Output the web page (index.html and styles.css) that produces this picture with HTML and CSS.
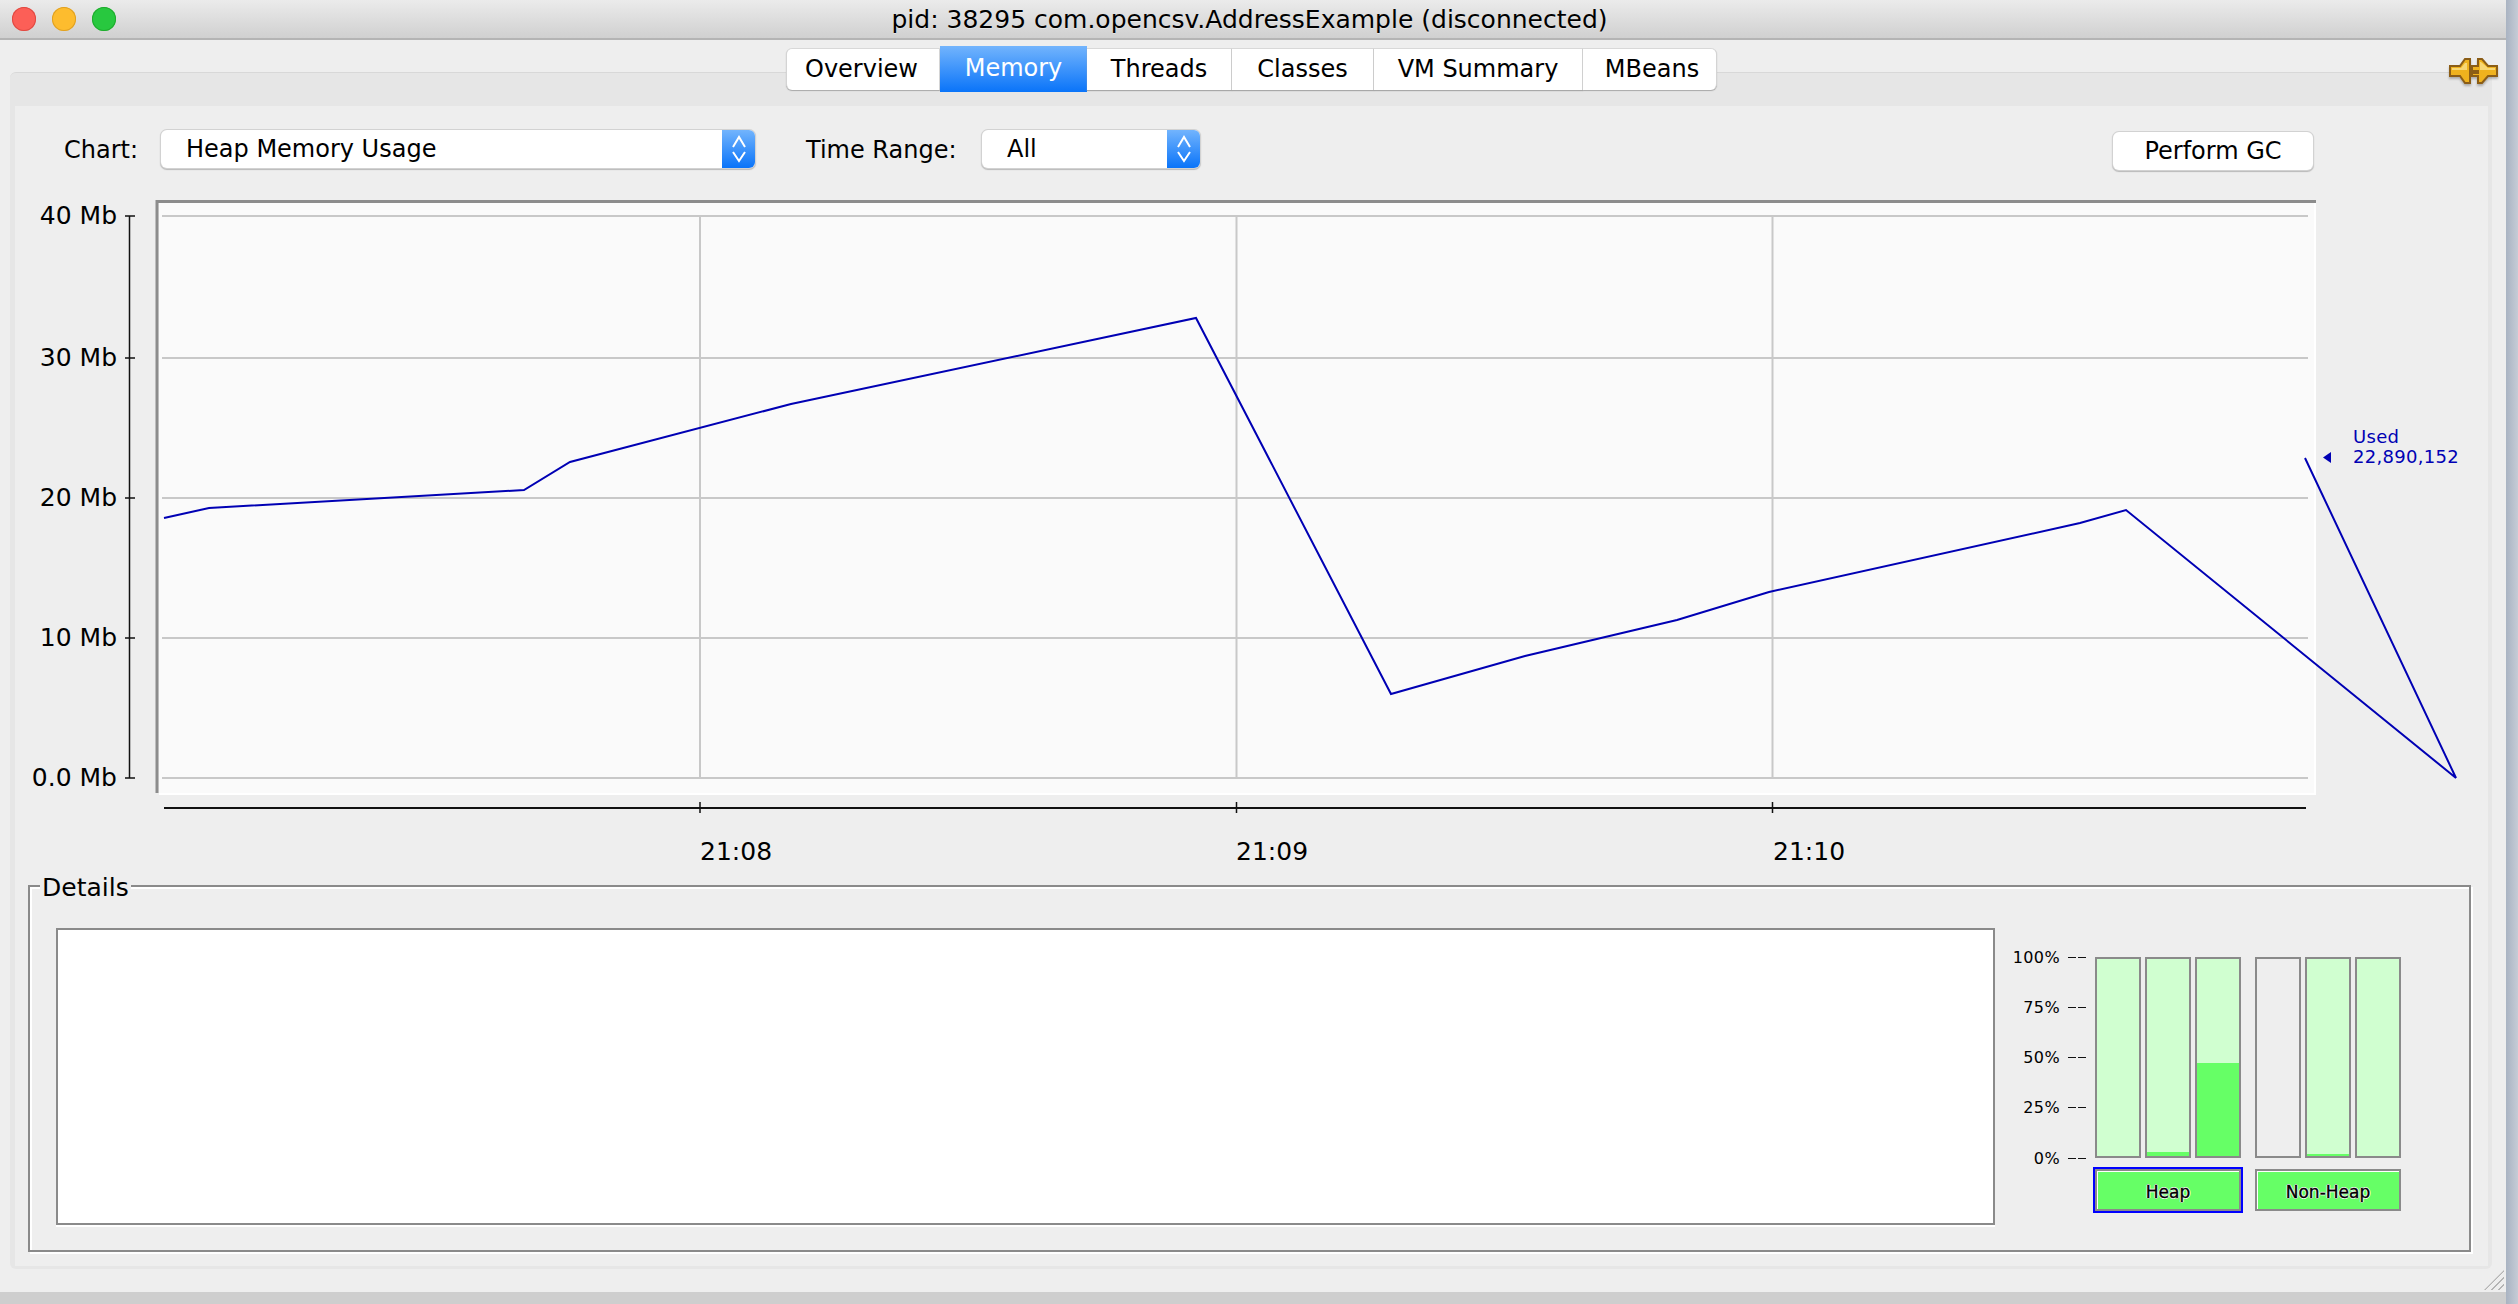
FILE: index.html
```html
<!DOCTYPE html>
<html>
<head>
<title>pid: 38295 com.opencsv.AddressExample (disconnected)</title>
<link rel="stylesheet" href="styles.css">
</head>
<body>
<div class="screen">
    <div class="window">
        <div class="titlebar">
            <div class="lights">
                <span class="light light-red"></span>
                <span class="light light-yellow"></span>
                <span class="light light-green"></span>
            </div>
            <span class="title">pid: 38295 com.opencsv.AddressExample (disconnected)</span>
        </div>

        <div class="tabs">
            <div class="tab tab-first">Overview</div>
            <div class="tab tab-active">Memory</div>
            <div class="tab">Threads</div>
            <div class="tab">Classes</div>
            <div class="tab">VM Summary</div>
            <div class="tab tab-last">MBeans</div>
        </div>

        <!-- disconnected plug -->
        <svg class="plug" width="50" height="28" viewBox="0 0 50 28">
            <path class="plug-body" d="M1 9h10l5-7h5v24h-5l-5-7H1z"/>
            <path class="plug-shine" d="M3 11h9l4-5h2v7H3z"/>
            <path class="plug-body" d="M29 2h4l6 7h9v10h-9l-6 7h-4v-7h-6v-3h6v-2h-6V9h6z"/>
            <path class="plug-shine" d="M31 5h1l7 6h7v2H31z"/>
        </svg>

        <div class="pane">
            <div class="content">
                <div class="controls">
                    <label class="label label-chart">Chart:</label>
                    <div class="combo combo-chart">
                        <span class="combo-text">Heap Memory Usage</span>
                        <span class="combo-arrows">
                            <svg width="16" height="28" viewBox="0 0 16 28"><path d="M2 12L8 2l6 10M2 17l6 9 6-9"/></svg>
                        </span>
                    </div>
                    <label class="label label-range">Time Range:</label>
                    <div class="combo combo-range">
                        <span class="combo-text">All</span>
                        <span class="combo-arrows">
                            <svg width="16" height="28" viewBox="0 0 16 28"><path d="M2 12L8 2l6 10M2 17l6 9 6-9"/></svg>
                        </span>
                    </div>
                    <div class="gc-button">Perform GC</div>
                </div>

                <svg class="chart" width="2472" height="695" viewBox="16 190 2472 695">
                    <rect class="plot-white" x="160" y="203" width="2157" height="592"/>
                    <rect class="plot" x="160" y="203" width="2155" height="590"/>
                    <path class="plot-edge" d="M158 793V201.500H2317"/>

                    <path class="grid" d="M163 216H2309M163 358H2309M163 498H2309M163 638H2309M163 778H2309"/>
                    <path class="grid" d="M701 216V778M1237.500 216V778M1773.500 216V778"/>

                    <path class="axis" d="M130.500 216V778M126 216H136M126 358H136M126 498H136M126 638H136M126 778H136"/>
                    <text class="axis-text" x="118" y="224" text-anchor="end">40 Mb</text>
                    <text class="axis-text" x="118" y="366" text-anchor="end">30 Mb</text>
                    <text class="axis-text" x="118" y="506" text-anchor="end">20 Mb</text>
                    <text class="axis-text" x="118" y="646" text-anchor="end">10 Mb</text>
                    <text class="axis-text" x="118" y="786" text-anchor="end">0.0 Mb</text>

                    <path class="axis axis-x" d="M165 808H2307"/>
                    <path class="axis" d="M701 802V813M1237.500 802V813M1773.500 802V813"/>
                    <text class="axis-text" x="701" y="860">21:08</text>
                    <text class="axis-text" x="1237" y="860">21:09</text>
                    <text class="axis-text" x="1774" y="860">21:10</text>

                    <polyline class="series" points="165,518 210,508 525,490 571,462 792,404 1197,318 1392,694 1526,656 1678,620 1770,592 2081,523 2127,510 2457,778 2306,458"/>

                    <path class="series-mark" d="M2332 452V463L2324 457.500z"/>
                    <text class="series-text" x="2354" y="443">Used</text>
                    <text class="series-text" x="2354" y="463">22,890,152</text>
                </svg>

                <div class="details">
                    <span class="details-title">Details</span>
                    <div class="details-text"></div>
                    <div class="pools">
                        <div class="scale">
                            <div class="scale-row"><span>100%</span><i class="tick"></i></div>
                            <div class="scale-row"><span>75%</span><i class="tick"></i></div>
                            <div class="scale-row"><span>50%</span><i class="tick"></i></div>
                            <div class="scale-row"><span>25%</span><i class="tick"></i></div>
                            <div class="scale-row"><span>0%</span><i class="tick"></i></div>
                        </div>
                        <div class="group">
                            <div class="bars">
                                <div class="bar"></div>
                                <div class="bar"><div class="bar-fill" style="height:2%"></div></div>
                                <div class="bar"><div class="bar-fill" style="height:47%"></div></div>
                            </div>
                            <div class="pool-btn pool-btn-selected">Heap</div>
                        </div>
                        <div class="group">
                            <div class="bars">
                                <div class="bar bar-empty"></div>
                                <div class="bar"><div class="bar-fill" style="height:1%"></div></div>
                                <div class="bar"></div>
                            </div>
                            <div class="pool-btn">Non-Heap</div>
                        </div>
                    </div>
                </div>
            </div>
        </div>

        <div class="grip"></div>
    </div>
    <div class="footer-strip"></div>
    <div class="edge-strip"></div>
</div>
</body>
</html>
```

FILE: styles.css
```css
* {
    box-sizing: border-box;
}
html, body {
    margin: 0;
    padding: 0;
}
body {
    font-family: "DejaVu Sans", sans-serif;
    font-size: 24px;
    color: #000;
    background-color: #cecece;
}
.screen {
    display: grid;
    grid-template-columns: 2506px 12px;
    grid-template-rows: 1292px 12px;
    width: 2518px;
    height: 1304px;
    overflow: hidden;
}
.window {
    position: relative;
    background-color: #eeeeee;
}
.footer-strip {
    grid-column: 1;
    grid-row: 2;
    background-color: #cecece;
}
.edge-strip {
    grid-column: 2;
    grid-row: 1 / 3;
    background: linear-gradient(to right, #a9b3c2, #c6ccd6);
}

/* title bar */
.titlebar {
    display: flex;
    align-items: center;
    height: 40px;
    padding: 0 12px;
    background: linear-gradient(to bottom, #ebebeb, #d0d0d0);
    border-bottom: 2px solid #b4b4b4;
}
.lights {
    display: flex;
    gap: 16px;
    width: 0;
}
.light {
    flex: none;
    width: 24px;
    height: 24px;
    border-radius: 50%;
}
.light-red {
    background-color: #fc5f57;
    box-shadow: inset 0 0 0 1px #df4a42;
}
.light-yellow {
    background-color: #fdbc2e;
    box-shadow: inset 0 0 0 1px #dfa023;
}
.light-green {
    background-color: #28c83f;
    box-shadow: inset 0 0 0 1px #1fab2d;
}
.title {
    flex: 1;
    padding-right: 7px;
    text-align: center;
    font-size: 25px;
    white-space: nowrap;
    text-shadow: 0 1px 0 rgba(255, 255, 255, 0.4);
}

/* tabs */
.tabs {
    position: relative;
    z-index: 2;
    display: grid;
    grid-template-columns: 154px 147px 145px 142px 209px 134px;
    justify-content: center;
    height: 39px;
    margin: 8px 3px -15px 0;
}
.tab {
    line-height: 41px;
    text-align: center;
    background-color: #fff;
    border-top: 1px solid #d8d8d8;
    border-right: 1px solid #d4d4d4;
    box-shadow: 0 1px 1px #a8a8a8;
}
.tab-first {
    padding-right: 3px;
    border-left: 1px solid #d4d4d4;
    border-radius: 6px 0 0 6px;
}
.tab-last {
    padding-left: 5px;
    border-radius: 0 6px 6px 0;
}
.tab-active {
    margin: -2px 0;
    line-height: 45px;
    color: #fff;
    border: 0;
    background: linear-gradient(to bottom, #72b4fd, #0a74f9);
    box-shadow: none;
}

.plug {
    position: absolute;
    z-index: 3;
    left: 2449px;
    top: 57px;
    filter: drop-shadow(0 2px 1px rgba(0, 0, 0, 0.25));
}
.plug-body {
    fill: #efb21e;
    stroke: #8b5d16;
    stroke-width: 2;
}
.plug-shine {
    fill: #f8d774;
}

/* panes */
.pane {
    width: 2482px;
    height: 1197px;
    margin-left: 10px;
    padding: 33px 4px 3px 5px;
    background-color: #e6e6e6;
    border-top: 1px solid #d8d8d8;
    border-radius: 6px 6px 6px 6px;
}
.content {
    height: 100%;
    background-color: #eeeeee;
}
.controls {
    display: flex;
    align-items: flex-start;
    height: 84px;
    padding: 24px 175px 0 49px;
}
.label {
    height: 38px;
    padding-top: 6px;
    white-space: nowrap;
}
.label-chart {
    width: 97px;
}
.label-range {
    width: 176px;
    margin-left: 51px;
}
.combo {
    display: flex;
    height: 38px;
    background-color: #fff;
    border-radius: 6px;
    box-shadow: 0 0 0 1px #d2d2d2, 0 1px 1px 1px #b8b8b8;
    overflow: hidden;
}
.combo-chart {
    width: 594px;
}
.combo-range {
    width: 218px;
}
.combo-text {
    flex: 1;
    padding-left: 25px;
    line-height: 38px;
}
.combo-arrows {
    display: flex;
    align-items: center;
    justify-content: center;
    width: 33px;
    background: linear-gradient(to bottom, #72b4fd, #0a74f9);
}
.combo-arrows path {
    fill: none;
    stroke: #fff;
    stroke-width: 2;
}
.gc-button {
    width: 200px;
    height: 38px;
    margin-top: 2px;
    margin-left: auto;
    line-height: 38px;
    text-align: center;
    background-color: #fff;
    border-radius: 6px;
    box-shadow: 0 0 0 1px #d2d2d2, 0 1px 1px 1px #b8b8b8;
}

/* chart */
.chart {
    display: block;
}
.plot-white {
    fill: #fff;
}
.plot {
    fill: #fafafa;
}
.plot-edge {
    fill: none;
    stroke: #8c8c8c;
    stroke-width: 3;
}
.grid {
    fill: none;
    stroke: #c8c8c8;
    stroke-width: 2;
}
.axis {
    fill: none;
    stroke: #111;
    stroke-width: 1.500;
}
.axis-x {
    stroke-width: 2;
}
.axis-text {
    font-size: 25px;
    fill: #000;
}
.series {
    fill: none;
    stroke: #0000b4;
    stroke-width: 2;
    stroke-linejoin: miter;
}
.series-mark {
    fill: #0000b4;
}
.series-text {
    font-size: 18px;
    letter-spacing: 0.300px;
    fill: #0000b4;
}

/* details box */
.details {
    position: relative;
    display: flex;
    width: 2443px;
    height: 367px;
    margin-left: 13px;
    padding: 41px 0 0 26px;
    border: 2px solid #8a8a8a;
    box-shadow: 2px 2px 0 #fff, inset 2px 2px 0 #fff;
}
.details-title {
    position: absolute;
    left: 10px;
    top: -13px;
    padding: 0 2px;
    font-size: 25px;
    line-height: 28px;
    background-color: #eeeeee;
}
.details-text {
    width: 1939px;
    height: 297px;
    background-color: #fff;
    border: 2px solid #8a8a8a;
    box-shadow: 0 2px 0 #fff;
}
.pools {
    display: flex;
    gap: 14px;
    font-size: 16px;
}
.scale {
    display: flex;
    flex-direction: column;
    justify-content: space-between;
    width: 91px;
    height: 221px;
    margin-top: 19px;
    margin-right: -5px;
    letter-spacing: 0.400px;
}
.scale-row {
    display: flex;
    align-items: center;
    justify-content: flex-end;
    gap: 8px;
    height: 20px;
}
.tick {
    width: 18px;
    height: 1px;
    background: linear-gradient(to right, #111 8px, transparent 8px, transparent 10px, #111 10px);
}
.group {
    display: flex;
    flex-direction: column;
    width: 146px;
    margin-top: 29px;
}
.bars {
    display: flex;
    gap: 4px;
    height: 201px;
}
.bar {
    display: flex;
    align-items: flex-end;
    width: 46px;
    height: 100%;
    background-color: #d0ffd0;
    border: 2px solid #8a8a8a;
}
.bar-empty {
    background-color: #eeeeee;
}
.bar-fill {
    width: 100%;
    background-color: #66ff66;
}
.pool-btn {
    height: 42px;
    margin-top: 11px;
    font-size: 17px;
    line-height: 42px;
    text-align: center;
    background-color: #66ff66;
    border: 2px solid #8a8a8a;
    box-shadow: inset 1px 1px 0 #fff;
    -webkit-text-stroke: 0.400px #000;
    text-shadow: 1px 0 0 #fff, -1px 0 0 #fff, 0 1px 0 #fff, 0 -1px 0 #fff;
}
.pool-btn-selected {
    outline: 2px solid #0000ff;
}

.grip {
    position: absolute;
    right: 2px;
    bottom: 2px;
    width: 20px;
    height: 20px;
    background: repeating-linear-gradient(135deg, transparent 0, transparent 4px, #b4b4b4 4px, #b4b4b4 5px);
    clip-path: polygon(100% 0, 100% 100%, 0 100%);
}
```
